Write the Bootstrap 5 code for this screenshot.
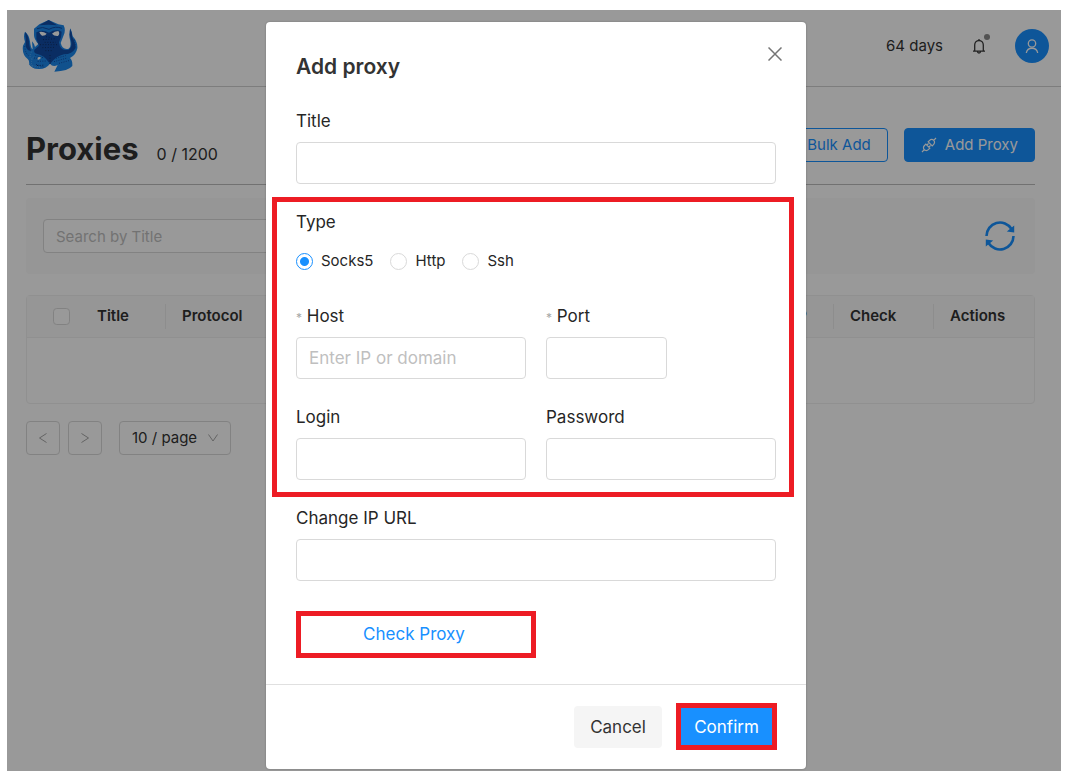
<!DOCTYPE html>
<html lang="en">
<head>
<meta charset="utf-8">
<meta name="viewport" content="width=device-width, initial-scale=1">
<title>Proxies</title>
<link href="https://cdn.jsdelivr.net/npm/bootstrap@5.3.0/dist/css/bootstrap.min.css" rel="stylesheet">
<style>
  :root { --brand: #1890ff; --mark-red: #ed1c24; --line: #d9d9d9; }
  body { font-family: Inter, "Liberation Sans", sans-serif; font-size: 15px; line-height: 24px; color: #333; background: #fff; padding: 10px 7px; }
  .app-frame { min-height: calc(100vh - 20px); background: #fff; }
  .app-bar { height: 77px; border-bottom: 1px solid #d0d0d0; padding: 0 12px 4px 15px; }
  .bell-btn { width: 24px; height: 24px; line-height: 0; }
  .bell-dot { position: absolute; top: 0; right: 1px; width: 6px; height: 6px; border-radius: 50%; background: #8a8a8a; }
  .avatar-btn { width: 34px; height: 34px; border-radius: 50%; background: var(--brand); color: #fff; }
  .page-main { padding: 41px 26px 0 19px; }
  .page-title { font-size: 31px; line-height: 42px; font-weight: 700; }
  .proxy-count { font-size: 16px; margin-left: 18px; }
  .title-row { height: 57px; border-bottom: 1px solid #bdbdbd; }
  .btn-app { --bs-btn-font-size: 15px; --bs-btn-line-height: 24px; --bs-btn-padding-y: 4px; --bs-btn-padding-x: 16px; --bs-btn-border-radius: 4px; --bs-btn-color: var(--brand); --bs-btn-border-color: var(--brand); }
  .btn-fill { --bs-btn-bg: var(--brand); --bs-btn-color: #fff; --bs-btn-hover-bg: #40a9ff; --bs-btn-hover-color: #fff; }
  .filter-bar { height: 76px; margin-top: 13px; padding: 0 17px; background: #fafafa; border-radius: 4px; }
  .search-box { width: 280px; height: 34px; font-size: 15px; border-color: var(--line); border-radius: 4px; padding: 4px 12px; }
  .form-control::placeholder { color: #bfbfbf; }
  .table-wrap { margin-top: 21px; border: 1px solid #f0f0f0; border-radius: 4px; }
  .proxy-table { table-layout: fixed; width: 100%; font-size: 15px; }
  .proxy-table th { height: 41px; padding: 0 16px; font-weight: 600; background: #fafafa; border-bottom: 1px solid #f0f0f0; position: relative; white-space: nowrap; }
  .proxy-table th.has-rule::after { content: ""; position: absolute; right: 0; top: 8px; bottom: 8px; width: 1px; background: #ececec; }
  .proxy-table th.pick-cell { padding: 0 0 0 26px; line-height: 0; }
  .proxy-table th.ip-cell { padding-right: 27px; }
  .proxy-table td { height: 66px; }
  .row-check { width: 17px; height: 17px; margin: 0; border-color: var(--line); border-radius: 3px; }
  .pager { margin-top: 17px; }
  .page-btn { width: 34px; height: 34px; border: 1px solid var(--line); border-radius: 4px; color: #a6a6a6; background: #fff; line-height: 0; }
  .page-size { width: 112px; height: 34px; margin-left: 9px; font-size: 15px; line-height: 24px; padding: 4px 28px 4px 12px; border-color: var(--line); border-radius: 4px; color: #333; background-size: 12px 12px; background-position: right 11px center; background-image: url("data:image/svg+xml,%3csvg xmlns='http://www.w3.org/2000/svg' viewBox='0 0 12 12'%3e%3cpath fill='none' stroke='%23a6a6a6' d='M1.500 2.500 6 9 10.500 2.500'/%3e%3c/svg%3e"); }

  .overlay { position: absolute; inset: 0; background: rgba(0,0,0,.4); padding: 12px 0 2px 4px; }
  .proxy-dialog { width: 100%; max-width: 540px; }
  .proxy-dialog .modal-content { border: 0; border-radius: 4px; background: #fff; box-shadow: 0 0 2px rgba(0,0,0,.3); color: #262626; font-size: 17px; }
  .proxy-dialog .modal-header { padding: 29px 24px 27px 30px; border: 0; }
  .proxy-dialog .modal-title { font-size: 21px; line-height: 31px; font-weight: 600; color: #333; }
  .close-btn { width: 14px; height: 14px; line-height: 0; color: #757575; margin-top: -4px; }
  .proxy-dialog .modal-body { padding: 0 30px 26px; }
  .field-label { display: block; line-height: 24px; margin-bottom: 9px; }
  .field-input { height: 42px; font-size: 17px; border-color: var(--line); border-radius: 4px; padding: 8px 12px; }
  .need { color: #a6a6a6; font-size: 12px; line-height: 1; }
  .marked-group { margin: 13px -18px 9px -24px; padding: 8px 13px 12px 19px; border: 5px solid var(--mark-red); }
  .field-row { --bs-gutter-x: 20px; }
  .field-row-next { margin-top: 26px; }
  .type-row { margin: 15px 0 31px; gap: 17px; font-size: 15px; }
  .type-row .form-check-input { width: 17px; height: 17px; margin: 0; border-color: var(--line); }
  .type-row .form-check-input:checked { border-color: var(--brand); background-color: #fff; background-size: 100% 100%; background-image: radial-gradient(circle, var(--brand) 4px, transparent 5px); }
  .port-input { width: 121px; }
  .check-btn { width: 240px; max-width: 100%; height: 47px; margin-top: 30px; border: 5px solid var(--mark-red); background: #fff; color: var(--brand); padding: 0 4px 2px 0; }
  .proxy-dialog .modal-footer { padding: 18px 29px 19px; gap: 14px; border-top: 1px solid #e0e0e0; }
  .proxy-dialog .modal-footer > * { margin: 0; }
  .cancel-btn { width: 88px; height: 42px; border: 0; border-radius: 4px; background: #f5f5f5; color: #333; }
  .confirm-btn { width: 101px; height: 47px; border: 5px solid var(--mark-red); background: var(--brand); color: #fff; padding: 0; }
</style>
</head>
<body>
<div class="app-frame position-relative">
  <header class="app-bar d-flex align-items-center justify-content-between">
    <a href="#" aria-label="Home" class="d-flex">
      <svg width="57" height="54" viewBox="67 57 171 162" aria-hidden="true">
        <path fill="#1c88ec" d="M103 86 119 73 147 60 176 73 192 76Q199 91 192 106L183 129Q189 151 207 146 216 142 211 119 206 102 212 85 217 96 219 109 235 126 233 145 229 166 211 174 219 181 218 198 206 213 164 215L174 195Q159 202 151 191 139 207 119 207 97 208 88 193 90 181 84 177 66 163 70 137L76 126Q70 107 76 95 88 104 91 124 93 145 99 148L97 124Q103 130 106 141L116 132Q102 116 103 103Z"/>
        <path fill="#114ca6" d="M119 76 147 60 172 76Q147 72 119 76ZM76 96Q86 105 88 125 90 146 95 152 82 154 78 138 80 119 76 96ZM212 86Q217 98 218 112 228 129 227 145 218 163 193 163 170 168 153 190L147 187Q135 166 111 161 101 158 104 149L118 137 110 117 110 97Q128 87 148 98 168 85 186 95L184 112 178 127Q181 155 207 149 219 141 214 121 208 103 212 86Z"/>
        <path fill="none" stroke="#114ca6" stroke-width="3" d="M112 86Q128 78 148 88 168 77 187 85"/>
        <path fill="#fff" d="M119 96Q131 94 141 101 137 108 127 107 121 104 119 96ZM157 101Q164 94 176 93 182 101 175 108 163 109 157 101Z"/>
        <path fill="none" stroke="#10306a" stroke-width="3" stroke-dasharray="3 5" d="M139 110 155 113M130 119 170 116M135 127 168 127M121 134 174 134M128 143 166 142M137 152 157 152M151 165V195M112 197 136 195"/>
        <path fill="none" stroke="#114ca6" stroke-width="3" stroke-dasharray="3 4" d="M75 138Q77 163 89 168M107 166 133 174M103 174 123 176M114 184 138 183M109 193 134 202M169 175 198 167M163 185 202 174M178 190 211 181M224 119 229 147"/>
        <path fill="none" stroke="#58acf5" stroke-width="3" stroke-dasharray="3 4" d="M96 155Q87 170 96 177M102 170Q91 184 98 197M88 189 105 205M98 197 121 202"/>
        <path fill="#fff" d="M115 172Q125 169 123 175 118 181 113 178Z"/>
      </svg>
    </a>
    <div class="d-flex align-items-center">
      <span>64 days</span>
      <button type="button" class="bell-btn btn p-0 border-0 position-relative ms-4" aria-label="Notifications">
        <svg width="16" height="16" viewBox="0 0 16 16" fill="none" stroke="#3a3a3a" stroke-width="1.300" aria-hidden="true"><path d="M8 1v1.500M2 13.200h12M3.700 13V7a4.300 4.500 0 0 1 8.600 0v6M6.500 13.500a1.500 1.500 0 0 0 3 0"/></svg>
        <span class="bell-dot"></span>
      </button>
      <button type="button" class="avatar-btn btn p-0 border-0 d-flex align-items-center justify-content-center ms-4" aria-label="Account">
        <svg width="16" height="16" viewBox="0 0 16 16" fill="none" stroke="currentColor" stroke-width="1.300" aria-hidden="true"><circle cx="8" cy="5.500" r="3.700"/><path d="M2.300 15a5.800 5.800 0 0 1 11.400 0"/></svg>
      </button>
    </div>
  </header>

  <main class="page-main">
    <div class="title-row d-flex align-items-start justify-content-between">
      <div class="d-flex align-items-baseline">
        <h1 class="page-title m-0">Proxies</h1>
        <span class="proxy-count">0 / 1200</span>
      </div>
      <div class="d-flex gap-3">
        <button type="button" class="btn btn-app">Bulk Add</button>
        <button type="button" class="btn btn-app btn-fill d-flex align-items-center gap-2">
          <svg width="16" height="16" viewBox="0 0 16 16" fill="none" stroke="currentColor" stroke-width="1.200" aria-hidden="true"><path d="M1 15l2.300-2.300M12.700 3.300 15 1M3.300 12.700a2.800 2.800 0 0 1 0-4L4.800 7.200l4 4-1.500 1.500a2.800 2.800 0 0 1-4 0zM12.700 3.300a2.800 2.800 0 0 0-4 0L7.200 4.800l4 4 1.500-1.500a2.800 2.800 0 0 0 0-4zM5.800 8.200l1.700-1.700M7.800 10.200l1.700-1.700"/></svg>
          <span>Add Proxy</span>
        </button>
      </div>
    </div>

    <div class="filter-bar d-flex align-items-center justify-content-between">
      <input type="text" class="form-control search-box" placeholder="Search by Title" aria-label="Search by Title">
      <button type="button" class="btn p-0 border-0 d-flex" aria-label="Refresh">
        <svg width="36" height="36" viewBox="0 0 36 36" aria-hidden="true"><g fill="none" stroke="#1890ff" stroke-width="2.600"><path d="M4.500 18A13.500 13.500 0 0 1 29.500 11"/><path d="M31.500 18A13.500 13.500 0 0 1 6.500 25"/></g><path fill="#1890ff" d="M32.200 7.500v7l-7.400-1zM3.800 28.500v-7l7.400 1z"/></svg>
      </button>
    </div>

    <div class="table-wrap">
      <table class="proxy-table">
        <colgroup><col style="width:54px"><col style="width:85px"><col style="width:120px"><col><col style="width:70px"><col style="width:100px"><col style="width:100px"></colgroup>
        <thead>
          <tr>
            <th class="pick-cell"><input type="checkbox" class="form-check-input row-check align-middle" aria-label="Select all"></th>
            <th class="has-rule">Title</th>
            <th>Protocol</th>
            <th></th>
            <th class="has-rule ip-cell text-end">IP</th>
            <th class="has-rule">Check</th>
            <th>Actions</th>
          </tr>
        </thead>
        <tbody><tr><td colspan="7"></td></tr></tbody>
      </table>
    </div>

    <nav class="pager d-flex gap-2" aria-label="Pages">
      <button type="button" class="page-btn p-0" aria-label="Previous page"><svg width="12" height="12" viewBox="0 0 12 12" fill="none" stroke="currentColor" aria-hidden="true"><path d="M9.500 1.500 2.500 6l7 4.500"/></svg></button>
      <button type="button" class="page-btn p-0" aria-label="Next page"><svg width="12" height="12" viewBox="0 0 12 12" fill="none" stroke="currentColor" aria-hidden="true"><path d="M2.500 1.500 9.500 6l-7 4.500"/></svg></button>
      <select class="form-select page-size" aria-label="Page size"><option>10 / page</option></select>
    </nav>
  </main>

  <div class="overlay d-flex justify-content-center align-items-start">
    <div class="proxy-dialog" role="dialog" aria-modal="true" aria-labelledby="dialogTitle">
      <form class="modal-content">
        <div class="modal-header align-items-start">
          <h2 class="modal-title" id="dialogTitle">Add proxy</h2>
          <button type="button" class="close-btn btn p-0 border-0" aria-label="Close"><svg width="14" height="14" viewBox="0 0 14 14" stroke="currentColor" stroke-width="1.500" aria-hidden="true"><path d="M.5.5l13 13M13.500.5l-13 13"/></svg></button>
        </div>
        <div class="modal-body">
          <label class="field-label" for="title">Title</label>
          <input type="text" class="form-control field-input" id="title">

          <div class="marked-group">
            <div role="radiogroup" aria-labelledby="typeLabel">
              <div id="typeLabel">Type</div>
              <div class="type-row d-flex">
                <label class="d-flex align-items-center gap-2"><input class="form-check-input" type="radio" name="type" checked>Socks5</label>
                <label class="d-flex align-items-center gap-2"><input class="form-check-input" type="radio" name="type">Http</label>
                <label class="d-flex align-items-center gap-2"><input class="form-check-input" type="radio" name="type">Ssh</label>
              </div>
            </div>
            <div class="row field-row">
              <div class="col-6">
                <label class="field-label" for="host"><span class="need">*</span> Host</label>
                <input type="text" class="form-control field-input" id="host" placeholder="Enter IP or domain">
              </div>
              <div class="col-6">
                <label class="field-label" for="port"><span class="need">*</span> Port</label>
                <input type="text" class="form-control field-input port-input" id="port">
              </div>
            </div>
            <div class="row field-row field-row-next">
              <div class="col-6">
                <label class="field-label" for="login">Login</label>
                <input type="text" class="form-control field-input" id="login">
              </div>
              <div class="col-6">
                <label class="field-label" for="password">Password</label>
                <input type="password" class="form-control field-input" id="password">
              </div>
            </div>
          </div>

          <label class="field-label" for="changeUrl">Change IP URL</label>
          <input type="text" class="form-control field-input" id="changeUrl">
          <button type="button" class="check-btn d-block">Check Proxy</button>
        </div>
        <div class="modal-footer">
          <button type="button" class="cancel-btn">Cancel</button>
          <button type="submit" class="confirm-btn">Confirm</button>
        </div>
      </form>
    </div>
  </div>
</div>
<script src="https://cdn.jsdelivr.net/npm/bootstrap@5.3.0/dist/js/bootstrap.bundle.min.js"></script>
</body>
</html>
